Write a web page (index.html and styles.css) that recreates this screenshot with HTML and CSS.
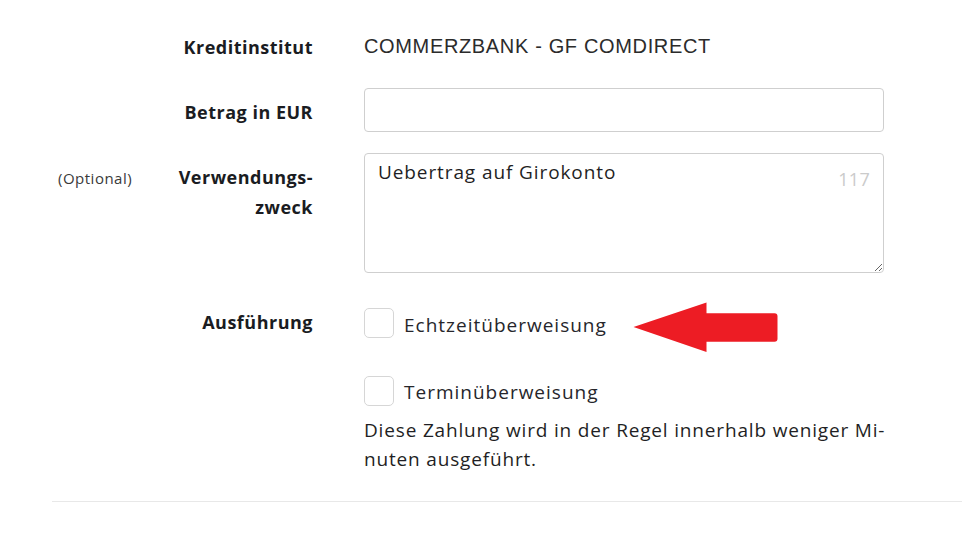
FILE: index.html
```html
<!DOCTYPE html>
<html lang="de">
<head>
<meta charset="utf-8">
<link rel="stylesheet" href="styles.css">
</head>
<body>
<div class="form">
  <div class="row row-bank">
    <div class="opt"></div>
    <div class="label">Kreditinstitut</div>
    <div class="field value">COMMERZBANK - GF COMDIRECT</div>
  </div>
  <div class="row row-amount">
    <div class="opt"></div>
    <div class="label">Betrag in EUR</div>
    <div class="field"><input class="input" type="text"></div>
  </div>
  <div class="row row-purpose">
    <div class="opt">(Optional)</div>
    <div class="label">Verwendungs-<br>zweck</div>
    <div class="field area-wrap">
      <textarea class="area">Uebertrag auf Girokonto</textarea>
      <span class="counter">117</span>
    </div>
  </div>
  <div class="row row-exec">
    <div class="opt"></div>
    <div class="label label-exec">Ausführung</div>
    <div class="field">
      <div class="option option-first"><span class="box"></span><span class="opt-text">Echtzeitüberweisung</span></div>
      <div class="option option-second"><span class="box"></span><span class="opt-text">Terminüberweisung</span></div>
      <p class="desc">Diese Zahlung wird in der Regel innerhalb weniger Mi-<br>nuten ausgeführt.</p>
    </div>
  </div>
  <div class="divider"></div>
</div>
<svg class="arrow" width="962" height="540" viewBox="0 0 962 540">
  <path d="M633.5 327 L706.5 302.5 L706.5 313.3 L774.5 313.3 Q777.5 313.3 777.5 316.3 L777.5 338.7 Q777.5 341.7 774.5 341.7 L706.5 341.7 L706.5 352 Z" fill="#ed1c24"/>
</svg>
</body>
</html>
```
FILE: styles.css
```css
html, body {
  margin: 0;
  padding: 0;
  background: #fff;
}
body {
  font-family: "Open Sans", Lato, sans-serif;
  color: #1f1f24;
  position: relative;
  width: 962px;
  height: 540px;
  overflow: hidden;
}
.form {
  padding-top: 32px;
  padding-left: 52px;
}
.row {
  display: flex;
  align-items: flex-start;
}
.opt {
  width: 104px;
  padding-left: 6px;
  font-size: 15px;
  color: #3a3a3a;
  line-height: 30px;
  letter-spacing: 0.5px;
}
.row-purpose .opt {
  padding-top: 10px;
}
.label {
  width: 151px;
  text-align: right;
  font-weight: 700;
  font-size: 18px;
  line-height: 31px;
  color: #1a1c22;
  letter-spacing: 0.5px;
  white-space: nowrap;
  display: flex;
  flex-direction: column;
  align-items: flex-end;
}
.field {
  margin-left: 51px;
  width: 520px;
}
.value {
  font-family: "Liberation Sans", Arial, sans-serif;
  font-size: 20px;
  line-height: 29px;
  color: #2b2b2b;
  letter-spacing: 0.65px;
}
.row-amount {
  margin-top: 25px;
}
.row-amount .label,
.row-purpose .label {
  padding-top: 9px;
  line-height: 30px;
}
.input {
  display: block;
  box-sizing: border-box;
  width: 520px;
  height: 44px;
  border: 1px solid #cfcfcf;
  border-radius: 4px;
  margin: 0;
  padding: 0 14px;
  font: inherit;
  outline: none;
}
.row-purpose {
  margin-top: 21px;
}
.area-wrap {
  position: relative;
  height: 120px;
}
.area {
  display: block;
  box-sizing: border-box;
  width: 520px;
  height: 120px;
  border: 1px solid #cfcfcf;
  border-radius: 4px;
  margin: 0;
  padding: 4px 13px;
  font-family: "Open Sans", Lato, sans-serif;
  font-size: 19px;
  line-height: 28px;
  letter-spacing: 0.9px;
  color: #1f1f24;
  outline: none;
}
.counter {
  position: absolute;
  right: 14px;
  top: 13px;
  font-size: 18px;
  line-height: 26px;
  letter-spacing: 0.3px;
  color: #cbcbcb;
}
.row-exec {
  margin-top: 35px;
}
.label-exec {
  line-height: 28px;
}
.option {
  display: flex;
  align-items: flex-start;
  height: 30px;
}
.option-second {
  margin-top: 38px;
}
.box {
  box-sizing: border-box;
  width: 30px;
  height: 30px;
  border: 1.5px solid #d6d6d6;
  border-radius: 5px;
  flex: none;
}
.opt-text {
  margin-left: 10px;
  padding-top: 1px;
  font-size: 19px;
  line-height: 30px;
  letter-spacing: 1px;
  color: #26262b;
}
.option-first .opt-text {
  padding-top: 2px;
}
.desc {
  margin: 10px 0 0 0;
  font-size: 19px;
  line-height: 29px;
  letter-spacing: 0.83px;
  color: #1f1f24;
  white-space: nowrap;
}
.divider {
  margin-top: 27px;
  height: 1px;
  background: #e8e8e8;
}
.arrow {
  position: absolute;
  left: 0;
  top: 0;
  pointer-events: none;
}
```
